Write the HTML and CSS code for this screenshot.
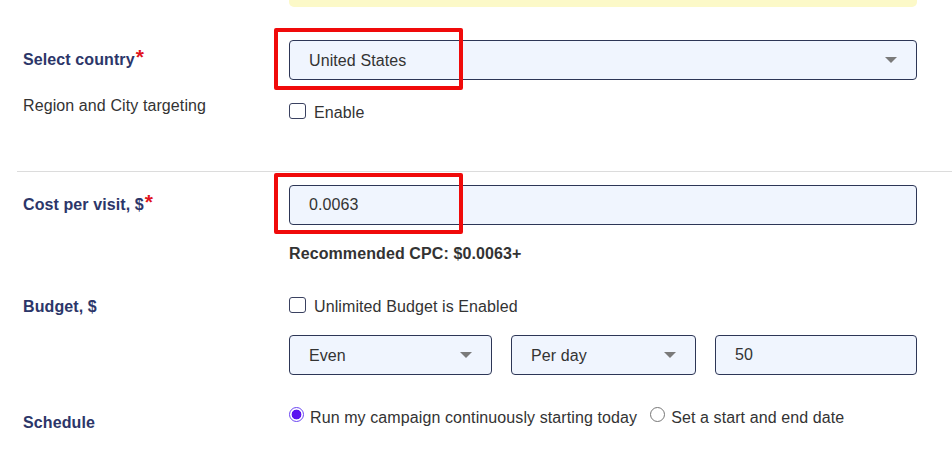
FILE: index.html
```html
<!DOCTYPE html>
<html lang="en">
<head>
<meta charset="utf-8">
<title>Campaign settings</title>
<link rel="stylesheet" href="styles.css">
</head>
<body>
<div class="form">
  <div class="notice-row"><div class="notice"></div></div>

  <div class="row row-country">
    <div class="label strong">Select country<span class="req">*</span></div>
    <div class="control annotated">
      <div class="select-wrap">
        <select class="field"><option>United States</option></select>
      </div>
      <div class="mark"></div>
    </div>
  </div>

  <div class="row row-region">
    <div class="label">Region and City targeting</div>
    <div class="control check-line">
      <span class="checkbox"></span><span class="check-text">Enable</span>
    </div>
  </div>

  <div class="divider"></div>

  <div class="row row-cost">
    <div class="label strong">Cost per visit, $<span class="req">*</span></div>
    <div class="control annotated">
      <input class="field" type="text" value="0.0063">
      <div class="mark"></div>
    </div>
  </div>

  <div class="row row-rec">
    <div></div>
    <div class="control rec">Recommended CPC: $0.0063+</div>
  </div>

  <div class="row row-budget">
    <div class="label strong">Budget, $</div>
    <div class="control">
      <div class="check-line">
        <span class="checkbox"></span><span class="check-text">Unlimited Budget is Enabled</span>
      </div>
      <div class="budget-grid">
        <div class="select-wrap"><select class="field"><option>Even</option></select></div>
        <div class="select-wrap"><select class="field"><option>Per day</option></select></div>
        <input class="field" type="text" value="50">
      </div>
    </div>
  </div>

  <div class="row row-schedule">
    <div class="label strong sched-label">Schedule</div>
    <div class="control radio-line">
      <span class="radio checked"></span><span class="radio-text">Run my campaign continuously starting today</span>
      <span class="radio"></span><span class="radio-text">Set a start and end date</span>
    </div>
  </div>
</div>
</body>
</html>
```

FILE: styles.css
```css
* { box-sizing: border-box; }

html, body {
  margin: 0;
  padding: 0;
  background: #ffffff;
}

body {
  font-family: "Liberation Sans", Arial, sans-serif;
  font-size: 16px;
  line-height: 18px;
  color: #333333;
  letter-spacing: 0.1px;
  overflow: hidden;
}

.form {
  width: 952px;
  padding-left: 23px;
}

.row {
  display: grid;
  grid-template-columns: 266px 628px;
}

.notice-row {
  padding-left: 266px;
}

.notice {
  width: 628px;
  height: 7px;
  background: #fcf9c8;
  border-radius: 0 0 5px 5px;
}

.label {
  color: #333333;
}

.label.strong {
  font-weight: bold;
  color: #2c3669;
}

.req {
  color: #e0141e;
  font-size: 21px;
  vertical-align: 1px;
  margin-left: 1px;
}

.control {
  position: relative;
}

/* rows */
.row-country {
  margin-top: 33px;
  align-items: center;
}
.row-country .label { padding-bottom: 3px; }

.row-region {
  margin-top: 17px;
  align-items: start;
}
.row-region .control { padding-top: 6px; }

.divider {
  margin-left: -6px;
  margin-top: 49px;
  height: 1px;
  background: #dcdcdc;
}

.row-cost {
  margin-top: 13px;
  align-items: center;
}
.row-cost .label { padding-bottom: 3px; }

.row-rec {
  margin-top: 20px;
}
.rec {
  font-weight: bold;
  color: #333333;
}

.row-budget {
  margin-top: 34px;
  align-items: start;
}
.row-budget .label { padding-top: 1px; }

.budget-grid {
  margin-top: 19px;
  display: grid;
  grid-template-columns: 203px 185px 1fr;
  column-gap: 19px;
}

.row-schedule {
  margin-top: 32px;
  align-items: start;
}
.sched-label { padding-top: 7px; }

/* fields */
.field {
  display: block;
  width: 100%;
  height: 40px;
  margin: 0;
  padding: 0 30px 0 19px;
  border: 1px solid #2d3656;
  border-radius: 4px;
  background: #f0f5fe;
  font-family: "Liberation Sans", Arial, sans-serif;
  font-size: 16px;
  letter-spacing: 0.1px;
  color: #333333;
  outline: none;
  -webkit-appearance: none;
  appearance: none;
}

.select-wrap {
  position: relative;
}
.select-wrap::after {
  content: "";
  position: absolute;
  right: 20px;
  top: 17px;
  width: 0;
  height: 0;
  border-left: 6px solid transparent;
  border-right: 6px solid transparent;
  border-top: 6px solid #7a7a7a;
  pointer-events: none;
}

/* annotation boxes */
.mark {
  position: absolute;
  left: -15px;
  top: -12px;
  width: 189px;
  height: 62px;
  border: 4px solid #f00a0a;
  border-radius: 2px;
  pointer-events: none;
}
.row-cost .mark {
  top: -12px;
  height: 61px;
}

/* checkbox */
.check-line {
  display: flex;
  align-items: flex-start;
}
.checkbox {
  flex: none;
  width: 17px;
  height: 16px;
  border: 1.5px solid #3a4160;
  border-radius: 3px;
  background: #ffffff;
  margin-right: 8px;
}
.check-text {
  color: #333333;
  line-height: 18px;
  margin-top: 1px;
}

/* radios */
.radio-line {
  display: flex;
  align-items: flex-start;
}
.radio {
  flex: none;
  width: 15px;
  height: 15px;
  border-radius: 50%;
  border: 1px solid #767676;
  background: #ffffff;
}
.radio.checked {
  border: 1.5px solid #6a45f2;
  background: radial-gradient(circle at center, #5a10f0 0, #5a10f0 4.6px, #ffffff 5.2px);
}
.radio-text {
  margin-left: 6px;
  margin-right: 13px;
  margin-top: 2px;
  color: #333333;
}
```
